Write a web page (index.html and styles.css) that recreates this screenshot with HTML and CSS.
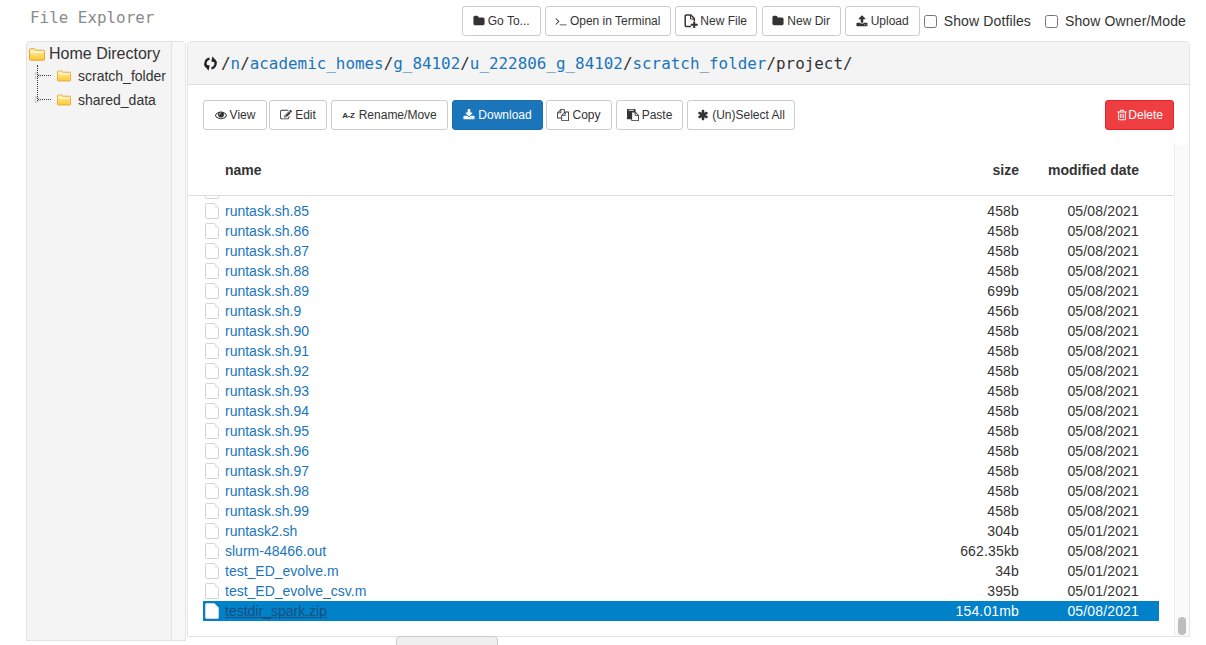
FILE: index.html
```html
<!DOCTYPE html>
<html lang="en">
<head>
    <meta charset="UTF-8">
    <title>File Explorer</title>
    <link rel="stylesheet" href="styles.css">
</head>
<body>
    <svg class="icon-defs" aria-hidden="true">
        <defs>
            <linearGradient id="folder-fill" x1="0" y1="0" x2="0" y2="1">
                <stop offset="0" stop-color="#fff3b0"/>
                <stop offset="1" stop-color="#fbc72e"/>
            </linearGradient>
        </defs>
        <symbol id="i-folder" viewBox="0 0 1792 1792"><path d="M1728 608v704q0 92-66 158t-158 66h-1216q-92 0-158-66t-66-158v-960q0-92 66-158t158-66h320q92 0 158 66t66 158v32h672q92 0 158 66t66 158z"/></symbol>
        <symbol id="i-terminal" viewBox="0 0 1792 1792"><path d="M649 983l-466 466q-10 10-23 10t-23-10l-50-50q-10-10-10-23t10-23l393-393-393-393q-10-10-10-23t10-23l50-50q10-10 23-10t23 10l466 466q10 10 10 23t-10 23zm1079 457v64q0 14-9 23t-23 9h-960q-14 0-23-9t-9-23v-64q0-14 9-23t23-9h960q14 0 23 9t9 23z"/></symbol>
        <symbol id="i-newfile" viewBox="0 0 14 14"><path d="M7 12.600H2.200a1 1 0 0 1-1-1V2a1 1 0 0 1 1-1h4.600l3.500 3.500v2.500" fill="none" stroke="currentColor" stroke-width="1.500"/><path d="M6.500 1.500v3.500h3.500" fill="none" stroke="currentColor"/><path d="M9.200 7.500h2v2.300h2.500v2h-2.500V14h-2v-2.200H6.800v-2h2.400z"/></symbol>
        <symbol id="i-upload" viewBox="0 0 1792 1792"><path d="M1344 1472q0-26-19-45t-45-19-45 19-19 45 19 45 45 19 45-19 19-45zm256 0q0-26-19-45t-45-19-45 19-19 45 19 45 45 19 45-19 19-45zm128-224v320q0 40-28 68t-68 28h-1472q-40 0-68-28t-28-68v-320q0-40 28-68t68-28h427q21 56 70.500 92t110.500 36h256q61 0 110.500-36t70.500-92h427q40 0 68 28t28 68zm-325-648q-17 40-59 40h-256v448q0 26-19 45t-45 19h-256q-26 0-45-19t-19-45v-448h-256q-42 0-59-40-17-39 14-69l448-448q18-19 45-19t45 19l448 448q31 30 14 69z"/></symbol>
        <symbol id="i-download" viewBox="0 0 1792 1792"><path d="M1344 1344q0-26-19-45t-45-19-45 19-19 45 19 45 45 19 45-19 19-45zm256 0q0-26-19-45t-45-19-45 19-19 45 19 45 45 19 45-19 19-45zm128-224v320q0 40-28 68t-68 28h-1472q-40 0-68-28t-28-68v-320q0-40 28-68t68-28h465l135 136q58 56 136 56t136-56l136-136h464q40 0 68 28t28 68zm-325-569q17 41-14 70l-448 448q-18 19-45 19t-45-19l-448-448q-31-29-14-70 17-39 59-39h256v-448q0-26 19-45t45-19h256q26 0 45 19t19 45v448h256q42 0 59 39z"/></symbol>
        <symbol id="i-eye" viewBox="0 0 1792 1792"><path d="M1664 960q-152-236-381-353 61 104 61 225 0 185-131.500 316.500t-316.500 131.500-316.500-131.500-131.500-316.500q0-121 61-225-229 117-381 353 133 205 333.500 326.500t434.500 121.500 434.500-121.500 333.500-326.500zm-720-384q0-20-14-34t-34-14q-125 0-214.500 89.500t-89.500 214.500q0 20 14 34t34 14 34-14 14-34q0-86 61-147t147-61q20 0 34-14t14-34zm848 384q0 34-20 69-140 230-376.500 368.500t-499.500 138.500-499.500-139-376.500-368q-20-35-20-69t20-69q140-229 376.500-368t499.500-139 499.500 139 376.500 368q20 35 20 69z"/></symbol>
        <symbol id="i-edit" viewBox="0 0 1792 1792"><path d="M888 1184l116-116-152-152-116 116v56h96v96h56zm440-720q-16-16-33 1l-350 350q-17 17-1 33t33-1l350-350q17-17 1-33zm80 594v190q0 119-84.500 203.500t-203.500 84.500h-832q-119 0-203.500-84.500t-84.500-203.500v-832q0-119 84.500-203.500t203.500-84.500h832q63 0 117 25 15 7 18 23 3 17-9 29l-49 49q-14 14-32 8-23-6-45-6h-832q-66 0-113 47t-47 113v832q0 66 47 113t113 47h832q66 0 113-47t47-113v-126q0-13 9-22l64-64q15-15 35-7t20 29zm-96-738l288 288-672 672h-288v-288zm444 132l-92 92-288-288 92-92q28-28 68-28t68 28l152 152q28 28 28 68t-28 68z"/></symbol>
        <symbol id="i-copy" viewBox="0 0 1792 1792"><path d="M1696 384q40 0 68 28t28 68v1216q0 40-28 68t-68 28h-960q-40 0-68-28t-28-68v-288h-544q-40 0-68-28t-28-68v-672q0-40 20-88t48-76l408-408q28-28 76-48t88-20h416q40 0 68 28t28 68v328q68-40 128-40h416zm-544 213l-299 299h299v-299zm-640-384l-299 299h299v-299zm196 647l316-316v-416h-384v416q0 40-28 68t-68 28h-416v640h512v-256q0-40 20-88t48-76zm956 804v-1152h-384v416q0 40-28 68t-68 28h-416v640h896z"/></symbol>
        <symbol id="i-paste" viewBox="0 0 1792 1792"><path d="M768 1664h896v-640h-416q-40 0-68-28t-28-68v-416h-384v1152zm256-1440v-64q0-13-9.500-22.500t-22.500-9.500h-704q-13 0-22.500 9.500t-9.500 22.500v64q0 13 9.500 22.500t22.500 9.500h704q13 0 22.500-9.500t9.500-22.500zm256 672h299l-299-299v299zm512 128v672q0 40-28 68t-68 28h-960q-40 0-68-28t-28-68v-160h-544q-40 0-68-28t-28-68v-1344q0-40 28-68t68-28h1088q40 0 68 28t28 68v328q21 13 36 28l408 408q28 28 48 76t20 88z"/></symbol>
        <symbol id="i-asterisk" viewBox="0 0 1792 1792"><path d="M1546 1050q46 26 59.500 77.500t-12.500 97.500l-64 110q-26 46-77.500 59.500t-97.500-12.500l-266-153v307q0 52-38 90t-90 38h-128q-52 0-90-38t-38-90v-307l-266 153q-46 26-97.500 12.500t-77.500-59.500l-64-110q-26-46-12.500-97.500t59.500-77.500l266-154-266-154q-46-26-59.500-77.500t12.500-97.500l64-110q26-46 77.500-59.500t97.500 12.500l266 153v-307q0-52 38-90t90-38h128q52 0 90 38t38 90v307l266-153q46-26 97.500-12.500t77.500 59.500l64 110q26 46 12.500 97.500t-59.500 77.500l-266 154z"/></symbol>
        <symbol id="i-trash" viewBox="0 0 1792 1792"><path d="M704 736v576q0 14-9 23t-23 9h-64q-14 0-23-9t-9-23v-576q0-14 9-23t23-9h64q14 0 23 9t9 23zm256 0v576q0 14-9 23t-23 9h-64q-14 0-23-9t-9-23v-576q0-14 9-23t23-9h64q14 0 23 9t9 23zm256 0v576q0 14-9 23t-23 9h-64q-14 0-23-9t-9-23v-576q0-14 9-23t23-9h64q14 0 23 9t9 23zm128 724v-948h-896v948q0 22 7 40.500t14.500 27 10.500 8.500h832q3 0 10.500-8.500t14.500-27 7-40.500zm-672-1076h448l-48-117q-7-9-17-11h-317q-10 2-17 11zm928 32v64q0 14-9 23t-23 9h-96v948q0 83-47 143.500t-113 60.500h-832q-66 0-113-58.500t-47-141.500v-952h-96q-14 0-23-9t-9-23v-64q0-14 9-23t23-9h309l70-167q15-37 54-63t79-26h320q40 0 79 26t54 63l70 167h309q14 0 23 9t9 23z"/></symbol>
        <symbol id="i-doc" viewBox="0 0 14 16"><path d="M.5 1.500a1 1 0 0 1 1-1h7.800l4.200 4.200v9.800a1 1 0 0 1-1 1h-11a1 1 0 0 1-1-1z" fill="#fff" stroke="#d4d4d4"/><path d="M9.300 1v3.700H13z" fill="#efefef"/></symbol>
        <symbol id="i-tree-folder" viewBox="0 0 16 13"><path d="M.5 1.700a1 1 0 0 1 1-1h4l1.200 1.500h7.800a1 1 0 0 1 1 1v8a1 1 0 0 1-1 1h-13a1 1 0 0 1-1-1z" fill="url(#folder-fill)" stroke="#e8a33d"/><path d="M1.500 3.500h13v1.300h-13z" fill="#fffbe3"/></symbol>
    </svg>

    <div class="top-bar">
        <div class="page-title">File Explorer</div>
        <div class="top-actions">
            <button class="btn btn-goto"><svg class="ico"><use href="#i-folder"/></svg> Go To...</button>
            <button class="btn btn-term"><svg class="ico"><use href="#i-terminal"/></svg> Open in Terminal</button>
            <button class="btn btn-newfile"><svg class="ico ico-large"><use href="#i-newfile"/></svg> New File</button>
            <button class="btn btn-newdir"><svg class="ico"><use href="#i-folder"/></svg> New Dir</button>
            <button class="btn"><svg class="ico"><use href="#i-upload"/></svg> Upload</button>
            <label class="check"><input type="checkbox"> Show Dotfiles</label>
            <label class="check check-owner"><input type="checkbox"> Show Owner/Mode</label>
        </div>
    </div>

    <div class="explorer">
        <div class="sidebar">
            <div class="tree">
                <div class="tree-root"><svg class="tree-ico"><use href="#i-tree-folder"/></svg>Home Directory</div>
                <div class="tree-item"><svg class="tree-ico tree-ico-small"><use href="#i-tree-folder"/></svg>scratch_folder</div>
                <div class="tree-item"><svg class="tree-ico tree-ico-small"><use href="#i-tree-folder"/></svg>shared_data</div>
            </div>
            <div class="sidebar-strip"></div>
        </div>

        <div class="panel">
            <div class="panel-heading">
                <svg class="reload" viewBox="0 0 16 16"><path d="M7 2.800A5.400 5.400 0 0 0 4 11.800M9 13.200A5.400 5.400 0 0 0 12 4.200" fill="none" stroke="#222" stroke-width="2.400"/><path d="M.8 8.800l6.400 1.400-1.400 5.600zM15.200 7.200l-6.400-1.400 1.400-5.600z" fill="#222"/></svg>
                <span class="crumbs">/<a href="#">n</a>/<a href="#">academic_homes</a>/<a href="#">g_84102</a>/<a href="#">u_222806_g_84102</a>/<a href="#">scratch_folder</a>/project/</span>
            </div>

            <div class="panel-actions">
                <button class="btn btn-view"><svg class="ico"><use href="#i-eye"/></svg> View</button>
                <button class="btn btn-edit"><svg class="ico"><use href="#i-edit"/></svg> Edit</button>
                <button class="btn btn-rename"><span class="az">A-Z</span> Rename/Move</button>
                <button class="btn btn-primary"><svg class="ico"><use href="#i-download"/></svg> Download</button>
                <button class="btn btn-copy"><svg class="ico"><use href="#i-copy"/></svg> Copy</button>
                <button class="btn btn-paste"><svg class="ico"><use href="#i-paste"/></svg> Paste</button>
                <button class="btn btn-select"><svg class="ico"><use href="#i-asterisk"/></svg> (Un)Select All</button>
                <button class="btn btn-danger"><svg class="ico"><use href="#i-trash"/></svg> Delete</button>
            </div>

            <div class="table-wrap">
                <div class="table-main">
                    <div class="row head-row">
                        <span></span>
                        <span>name</span>
                        <span class="num">size</span>
                        <span class="num">modified date</span>
                    </div>
                    <div class="rows">
                        <div class="row"><svg class="doc"><use href="#i-doc"/></svg><a href="#">runtask.sh.84</a><span class="num">458b</span><span class="num">05/08/2021</span></div>
                        <div class="row"><svg class="doc"><use href="#i-doc"/></svg><a href="#">runtask.sh.85</a><span class="num">458b</span><span class="num">05/08/2021</span></div>
                        <div class="row"><svg class="doc"><use href="#i-doc"/></svg><a href="#">runtask.sh.86</a><span class="num">458b</span><span class="num">05/08/2021</span></div>
                        <div class="row"><svg class="doc"><use href="#i-doc"/></svg><a href="#">runtask.sh.87</a><span class="num">458b</span><span class="num">05/08/2021</span></div>
                        <div class="row"><svg class="doc"><use href="#i-doc"/></svg><a href="#">runtask.sh.88</a><span class="num">458b</span><span class="num">05/08/2021</span></div>
                        <div class="row"><svg class="doc"><use href="#i-doc"/></svg><a href="#">runtask.sh.89</a><span class="num">699b</span><span class="num">05/08/2021</span></div>
                        <div class="row"><svg class="doc"><use href="#i-doc"/></svg><a href="#">runtask.sh.9</a><span class="num">456b</span><span class="num">05/08/2021</span></div>
                        <div class="row"><svg class="doc"><use href="#i-doc"/></svg><a href="#">runtask.sh.90</a><span class="num">458b</span><span class="num">05/08/2021</span></div>
                        <div class="row"><svg class="doc"><use href="#i-doc"/></svg><a href="#">runtask.sh.91</a><span class="num">458b</span><span class="num">05/08/2021</span></div>
                        <div class="row"><svg class="doc"><use href="#i-doc"/></svg><a href="#">runtask.sh.92</a><span class="num">458b</span><span class="num">05/08/2021</span></div>
                        <div class="row"><svg class="doc"><use href="#i-doc"/></svg><a href="#">runtask.sh.93</a><span class="num">458b</span><span class="num">05/08/2021</span></div>
                        <div class="row"><svg class="doc"><use href="#i-doc"/></svg><a href="#">runtask.sh.94</a><span class="num">458b</span><span class="num">05/08/2021</span></div>
                        <div class="row"><svg class="doc"><use href="#i-doc"/></svg><a href="#">runtask.sh.95</a><span class="num">458b</span><span class="num">05/08/2021</span></div>
                        <div class="row"><svg class="doc"><use href="#i-doc"/></svg><a href="#">runtask.sh.96</a><span class="num">458b</span><span class="num">05/08/2021</span></div>
                        <div class="row"><svg class="doc"><use href="#i-doc"/></svg><a href="#">runtask.sh.97</a><span class="num">458b</span><span class="num">05/08/2021</span></div>
                        <div class="row"><svg class="doc"><use href="#i-doc"/></svg><a href="#">runtask.sh.98</a><span class="num">458b</span><span class="num">05/08/2021</span></div>
                        <div class="row"><svg class="doc"><use href="#i-doc"/></svg><a href="#">runtask.sh.99</a><span class="num">458b</span><span class="num">05/08/2021</span></div>
                        <div class="row"><svg class="doc"><use href="#i-doc"/></svg><a href="#">runtask2.sh</a><span class="num">304b</span><span class="num">05/01/2021</span></div>
                        <div class="row"><svg class="doc"><use href="#i-doc"/></svg><a href="#">slurm-48466.out</a><span class="num">662.35kb</span><span class="num">05/08/2021</span></div>
                        <div class="row"><svg class="doc"><use href="#i-doc"/></svg><a href="#">test_ED_evolve.m</a><span class="num">34b</span><span class="num">05/01/2021</span></div>
                        <div class="row"><svg class="doc"><use href="#i-doc"/></svg><a href="#">test_ED_evolve_csv.m</a><span class="num">395b</span><span class="num">05/01/2021</span></div>
                        <div class="row selected"><svg class="doc"><use href="#i-doc"/></svg><a href="#">testdir_spark.zip</a><span class="num">154.01mb</span><span class="num">05/08/2021</span></div>
                    </div>
                </div>
                <div class="scroll-track"><div class="scroll-thumb"></div></div>
            </div>
        </div>
    </div>

    <div class="bottom-tab"></div>
</body>
</html>
```

FILE: styles.css
```css
* {
    box-sizing: border-box;
}

html, body {
    height: 645px;
    overflow: hidden;
}

body {
    margin: 0;
    position: relative;
    background: #fff;
    color: #333;
    font-family: "Liberation Sans", Arial, sans-serif;
    font-size: 14px;
}

a {
    color: #1b75bb;
    text-decoration: none;
}

.icon-defs {
    position: absolute;
    width: 0;
    height: 0;
}

.top-bar {
    display: flex;
    justify-content: space-between;
    height: 41px;
    padding: 6px 20px 0 30px;
}

.page-title {
    font-family: "DejaVu Sans Mono", monospace;
    font-size: 15.9px;
    line-height: 23px;
    color: #8a8a8a;
}

.top-actions {
    display: flex;
    align-items: flex-start;
    gap: 4px;
}

.btn {
    display: inline-flex;
    align-items: center;
    justify-content: center;
    gap: 3px;
    height: 30px;
    padding: 0 10px;
    background: #fff;
    border: 1px solid #ccc;
    border-radius: 3px;
    color: #333;
    font-family: inherit;
    font-size: 12px;
    white-space: nowrap;
}

.btn-goto {
    width: 79px;
}

.btn-term {
    width: 126px;
}

.btn-newfile {
    width: 82px;
    margin-right: 1px;
    padding: 0;
    gap: 2px;
}

.btn-newdir {
    width: 79px;
    padding: 0;
}

.btn-view {
    width: 64px;
    margin-right: -2px;
}

.btn-edit {
    width: 58px;
}

.btn-rename {
    width: 117px;
}

.btn-copy {
    width: 66px;
}

.btn-paste {
    width: 67px;
}

.btn-select {
    width: 108px;
    padding: 0;
}

.ico {
    width: 12px;
    height: 12px;
    fill: currentColor;
    flex: none;
}

.ico-large {
    width: 14px;
    height: 14px;
}

.az {
    font-size: 8px;
    font-weight: bold;
    letter-spacing: -0.3px;
    margin-right: 1px;
}

.btn-primary {
    width: 91px;
    margin-right: -1px;
    background: #1b75bb;
    border-color: #1b6fb0;
    color: #fff;
}

.btn-danger {
    margin-left: auto;
    gap: 0;
    background: #ef3e42;
    border-color: #e3242b;
    color: #fff;
}

.check {
    display: flex;
    align-items: center;
    gap: 7px;
    height: 30px;
    font-size: 14px;
    letter-spacing: 0.13px;
}

.check input {
    width: 13px;
    height: 13px;
    margin: 0;
}

.check-owner {
    margin-left: 10px;
}

.explorer {
    display: flex;
    height: 600px;
    padding: 0 16px 0 26px;
}

.sidebar {
    display: flex;
    width: 160px;
    height: 600px;
    margin-right: 1px;
    background: #f4f4f4;
    border: 1px solid #e3e3e3;
    border-radius: 4px 4px 0 0;
}

.tree {
    position: relative;
    width: 145px;
    border-right: 1px solid #e3e3e3;
    padding: 2px 0 0 2px;
}

.tree-root {
    display: flex;
    align-items: center;
    height: 20px;
    font-size: 16px;
    gap: 4px;
}

.tree-item {
    position: relative;
    display: flex;
    align-items: center;
    height: 24px;
    margin-left: 28px;
    gap: 7px;
}

/* dotted connector and the little expand arrow */
.tree-item:before {
    content: "";
    position: absolute;
    left: -19px;
    top: 11px;
    width: 13px;
    border-top: 1px dotted #333;
}

.tree-item:after {
    content: "\25B7";
    position: absolute;
    left: -22px;
    top: 5px;
    font-family: "DejaVu Sans", sans-serif;
    font-size: 9px;
    line-height: 13px;
    color: #a8a8a8;
}

.tree:after {
    content: "";
    position: absolute;
    left: 10px;
    top: 23px;
    height: 36px;
    border-left: 1px dotted #333;
}

.tree-ico {
    width: 16px;
    height: 13px;
    flex: none;
}

.tree-ico-small {
    width: 14px;
    height: 12px;
}

.sidebar-strip {
    flex: 1;
    background: #f8f8f8;
}

.panel {
    flex: 1;
    display: flex;
    flex-direction: column;
    height: 596px;
    border: 1px solid #e3e3e3;
    border-radius: 4px 4px 0 0;
}

.panel-heading {
    display: flex;
    align-items: center;
    gap: 3px;
    height: 43px;
    padding-left: 15px;
    background: #f4f4f4;
    border-bottom: 1px solid #ddd;
}

.reload {
    width: 15px;
    height: 15px;
}

.crumbs {
    font-family: "DejaVu Sans Mono", monospace;
    font-size: 15.9px;
    color: #333;
}

.panel-actions {
    display: flex;
    gap: 4px;
    padding: 15px;
}

.table-wrap {
    flex: 1;
    display: flex;
    min-height: 0;
}

.table-main {
    flex: 1;
    display: flex;
    flex-direction: column;
    min-width: 0;
}

.row {
    display: grid;
    grid-template-columns: 20px 1fr 100px 120px;
    align-items: center;
    height: 20px;
    padding: 0 35px 0 17px;
    white-space: nowrap;
}

.head-row {
    height: 51px;
    padding-bottom: 1px;
    border-bottom: 1px solid #ddd;
    font-weight: bold;
}

.num {
    text-align: right;
}

.rows {
    flex: 1;
    overflow: hidden;
}

.rows .num {
    letter-spacing: 0.15px;
}

.rows .row:first-child {
    margin-top: -15px;
}

.rows .row {
    margin: 0 15px;
    padding: 0 20px 0 2px;
}

.doc {
    width: 14px;
    height: 16px;
}

.rows .selected {
    background: #0081c9;
    color: #fff;
}

.selected a {
    color: #17507d;
    text-decoration: underline;
}

.scroll-track {
    position: relative;
    width: 15px;
    background: #fafafa;
    border-left: 1px solid #eee;
}

.scroll-thumb {
    position: absolute;
    left: 3px;
    bottom: 1px;
    width: 8px;
    height: 18px;
    background: #bdbdbd;
    border-radius: 4px;
}

.bottom-tab {
    position: absolute;
    left: 396px;
    top: 636px;
    width: 102px;
    height: 20px;
    background: #f0f0f0;
    border: 1px solid #ccc;
    border-radius: 4px;
}
```
